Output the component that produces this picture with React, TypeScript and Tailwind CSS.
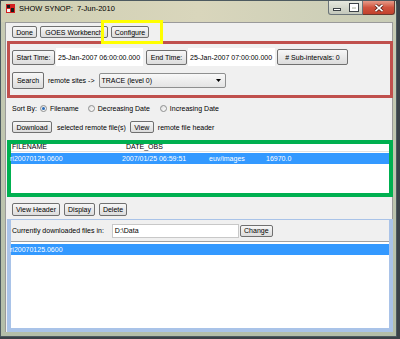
import React from 'react';

const font = { fontFamily: '"Liberation Sans", Arial, sans-serif' };

function Btn({ children, className = '' }: { children: React.ReactNode; className?: string }) {
  return (
    <div
      className={`flex shrink-0 items-center justify-center rounded-[2px] border border-[#707070] bg-gradient-to-b from-[#f7f7f7] to-[#dcdcdc] text-[7px] leading-none text-black ${className}`}
    >
      {children}
    </div>
  );
}

function Radio({ checked = false }: { checked?: boolean }) {
  return (
    <div className="flex h-[7px] w-[7px] shrink-0 items-center justify-center rounded-full border border-[#8e8f8f] bg-gradient-to-br from-[#dcdcdc] to-[#ffffff]">
      {checked && <div className="h-[3px] w-[3px] rounded-full bg-[#2a6bb8]" />}
    </div>
  );
}

export default function App() {
  return (
    <div className="h-[339px] w-[400px] overflow-hidden bg-[#3a4248]" style={font}>
      <div className="flex h-[337px] w-[397px] flex-col rounded-t-[6px] border border-[#4d5a60] bg-gradient-to-b from-[#c9ccb4] to-[#b3bea9]">
        {/* Title bar */}
        <div className="flex h-[21px] shrink-0 items-start bg-gradient-to-r from-[#cfcfb3] via-[#d9d6bc] to-[#c8ccb6]">
          <svg className="ml-[5px] mt-[3px]" width="9" height="9" viewBox="0 0 9 9">
            <rect width="9" height="9" fill="#d42020" />
            <rect x="1" y="1" width="3" height="3" fill="#1a1a1a" />
            <rect x="5" y="4" width="3" height="4" fill="#1a1a1a" />
            <rect x="1" y="5" width="3" height="3" fill="#f5f5f5" />
          </svg>
          <div className="ml-[4px] mt-[3px] text-[7.5px] leading-[10px] text-black">SHOW SYNOP:&nbsp; 7-Jun-2010</div>
          <div className="ml-auto mr-[1px] flex">
            <div className="flex h-[14px] w-[35px] rounded-bl-[3px] border border-t-0 border-[#6a7378] bg-gradient-to-b from-[#e6e8de] to-[#c3c8bb]">
              <div className="flex w-[17px] items-end justify-center pb-[3px]">
                <div className="h-[3px] w-[8px] border border-[#3c4246] bg-white" />
              </div>
              <div className="flex w-[17px] items-center justify-center">
                <div className="h-[7px] w-[8px] border-[2px] border-t-[3px] border-white outline outline-1 outline-[#3c4246]" />
              </div>
            </div>
            <div className="flex h-[14px] w-[32px] items-center justify-center rounded-br-[3px] border border-l-0 border-t-0 border-[#6a3a30] bg-gradient-to-b from-[#e69a88] via-[#d0533e] to-[#c2412c]">
              <svg width="10" height="8" viewBox="0 0 10 8">
                <path d="M1.5 0.8 L8.5 7.2 M8.5 0.8 L1.5 7.2" stroke="#4a1a12" strokeWidth="3" />
                <path d="M1.5 0.8 L8.5 7.2 M8.5 0.8 L1.5 7.2" stroke="#ffffff" strokeWidth="1.6" />
              </svg>
            </div>
          </div>
        </div>

        {/* Client */}
        <div className="mb-[4px] ml-[4px] mr-[3px] flex flex-1 flex-col border-l border-r border-t border-[#9a9a9a] bg-[#f0f0f0] text-[7px] leading-none text-black">
          {/* top buttons */}
          <div className="relative ml-[6px] mt-[3px] flex h-[12px] gap-[3px]">
            <Btn className="h-[12px] w-[25px]">Done</Btn>
            <Btn className="h-[12px] w-[68px]">GOES Workbench</Btn>
            <Btn className="h-[12px] w-[38px]">Configure</Btn>
            <div className="absolute left-[89px] top-[-6px] z-10 h-[24px] w-[62px] border-[3.5px] border-[#ffff00]" />
          </div>

          {/* red box */}
          <div className="ml-[1px] mt-[3px] h-[57px] w-[386px] border-[3px] border-[#c0504d] pl-[2px]">
            <div className="mt-[4px] flex h-[18px] items-center">
              <Btn className="h-[15px] w-[43px]">Start Time:</Btn>
              <div className="ml-[1px] flex h-[18px] w-[87px] items-center bg-white pl-[2px]">25-Jan-2007 06:00:00.000</div>
              <Btn className="ml-[3px] h-[15px] w-[41px]">End Time:</Btn>
              <div className="ml-[1px] flex h-[18px] w-[87px] items-center bg-white pl-[2px]">25-Jan-2007 07:00:00.000</div>
              <Btn className="ml-[2px] h-[16px] w-[71px]"># Sub-intervals: 0</Btn>
            </div>
            <div className="mt-[6px] flex h-[17px] items-center">
              <Btn className="h-[17px] w-[32px]">Search</Btn>
              <span className="ml-[4px]">remote sites -&gt;</span>
              <div className="ml-[4px] flex h-[15px] w-[127px] items-center justify-between rounded-[2px] border border-[#8e8f8f] bg-gradient-to-b from-[#f8f8f8] to-[#e4e4e4] pl-[2px] pr-[4px]">
                <span>TRACE (level 0)</span>
                <svg width="5" height="3" viewBox="0 0 5 3">
                  <path d="M0 0 L5 0 L2.5 3 Z" fill="#000" />
                </svg>
              </div>
            </div>
          </div>

          {/* sort row */}
          <div className="ml-[6px] mt-[5px] flex h-[10px] items-center">
            <span>Sort By:</span>
            <div className="ml-[3px]"><Radio checked /></div>
            <span className="ml-[3px]">Filename</span>
            <div className="ml-[9px]"><Radio /></div>
            <span className="ml-[3px]">Decreasing Date</span>
            <div className="ml-[10px]"><Radio /></div>
            <span className="ml-[3px]">Increasing Date</span>
          </div>

          {/* download row */}
          <div className="ml-[6px] mt-[8px] flex h-[12px] items-center">
            <Btn className="h-[12px] w-[40px]">Download</Btn>
            <span className="ml-[5px]">selected remote file(s)</span>
            <Btn className="ml-[4px] h-[12px] w-[24px]">View</Btn>
            <span className="ml-[4px]">remote file header</span>
          </div>

          {/* green list */}
          <div className="ml-[1px] mt-[7px] flex h-[57px] w-[386px] flex-col border-[4px] border-[#00b050] bg-white">
            <div className="flex h-[8px] items-end overflow-hidden border-b border-[#e2e2e2] pl-[1px]">
              <span className="w-[114px] leading-[9px]">FILENAME</span>
              <span className="leading-[9px]">DATE_OBS</span>
            </div>
            <div className="mt-[1px] flex h-[11px] items-center bg-[#3399ff] text-white">
              <span className="w-[112px] -ml-[1px]">ri20070125.0600</span>
              <span className="w-[87px]">2007/01/25 06:59:51</span>
              <span className="w-[57px]">euv/images</span>
              <span>16970.0</span>
            </div>
          </div>

          {/* list buttons */}
          <div className="ml-[6px] mt-[6px] flex h-[13px] gap-[4px]">
            <Btn className="h-[13px] w-[48px]">View Header</Btn>
            <Btn className="h-[13px] w-[31px]">Display</Btn>
            <Btn className="h-[13px] w-[28px]">Delete</Btn>
          </div>

          {/* downloaded panel */}
          <div className="ml-[1px] mt-[3px] flex w-[386px] flex-1 flex-col border-[4px] border-t-[1px] border-[#a9c3e8]">
            <div className="flex h-[22px] items-center border-b border-[#a0a0a0] pl-[1px]">
              <span>Currently downloaded files in:</span>
              <div className="ml-[8px] flex h-[14px] w-[127px] items-center border border-[#c8c8c8] bg-white pl-[2px]">D:\Data</div>
              <Btn className="ml-[1px] h-[12px] w-[33px]">Change</Btn>
            </div>
            <div className="flex-1 bg-white pt-[2px]">
              <div className="flex h-[11px] items-center bg-[#3399ff] text-white">
                <span className="-ml-[1px]">ri20070125.0600</span>
              </div>
            </div>
          </div>
        </div>
      </div>
    </div>
  );
}
